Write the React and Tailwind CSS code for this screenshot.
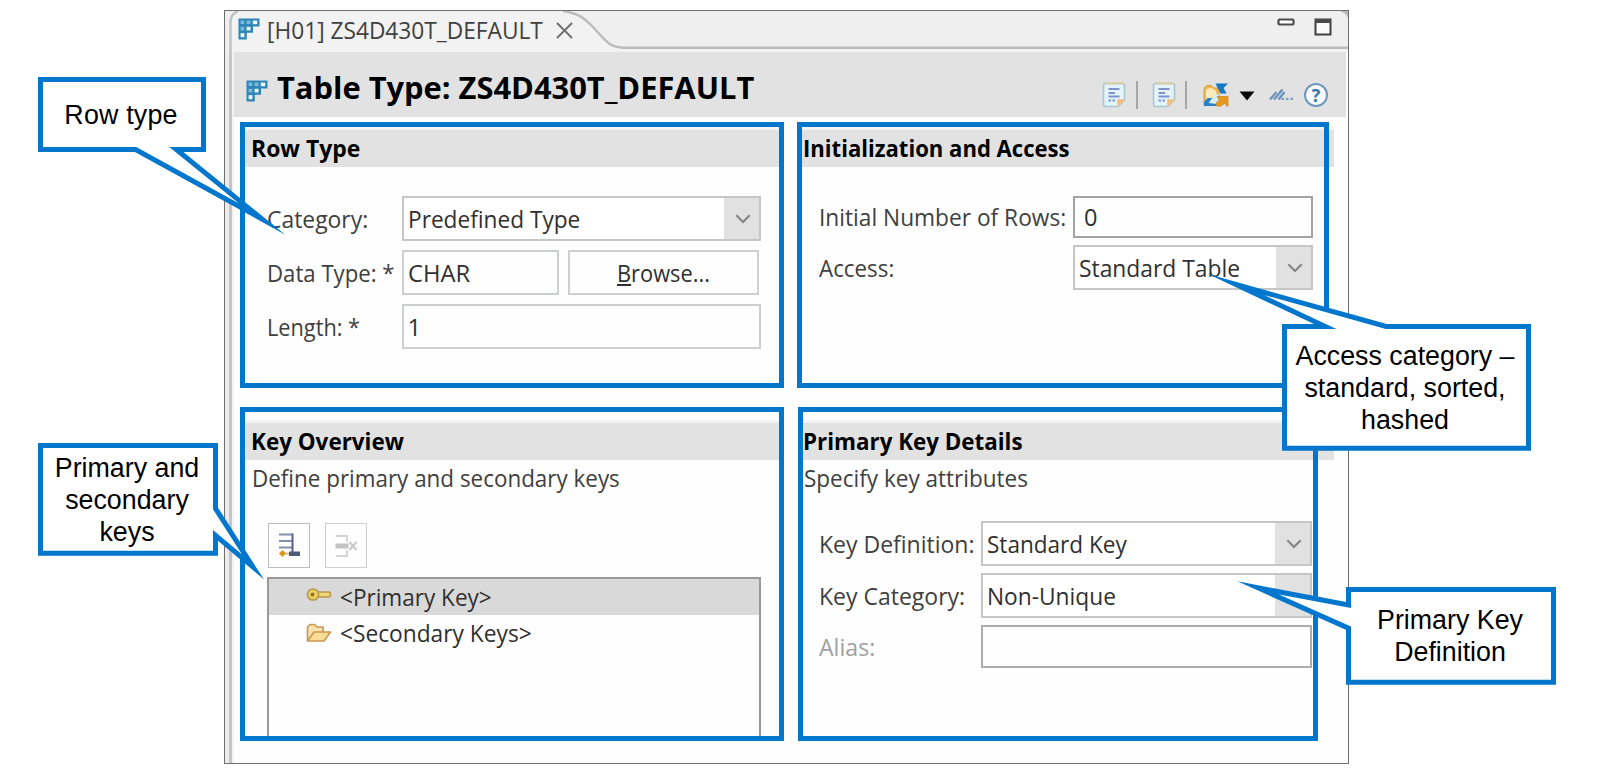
const SANS = "font-['Open_Sans','Liberation_Sans',sans-serif]";

function Txt({ className = "", children }) {
  return (
    <span className={`inline-block origin-left whitespace-nowrap text-[24px] leading-[24px] ${className}`}>
      {children}
    </span>
  );
}

function GridIcon() {
  return (
    <svg width="22" height="22" viewBox="0 0 22 22" className="shrink-0">
      <path d="M0.500 0.500H21.500V8.500H15V14.800H8.800V21.500H0.500Z" fill="#2f86b6" />
      <g fill="#7dbbdc">
        <rect x="2.600" y="2.600" width="3.600" height="3.400" />
        <rect x="8.600" y="2.600" width="3.800" height="3.400" />
        <rect x="2.600" y="8.800" width="3.600" height="3.600" />
      </g>
      <g fill="#f4fbff">
        <rect x="14.800" y="2.600" width="4.400" height="3.600" />
        <rect x="8.600" y="8.800" width="3.900" height="3.600" />
        <rect x="2.600" y="15.200" width="3.800" height="4" />
      </g>
    </svg>
  );
}

function NoteIcon() {
  return (
    <svg width="24" height="26" viewBox="0 0 24 26" className="shrink-0">
      <path d="M3.500 1.500H20.500Q22.500 1.500 22.500 3.500V18L16 24.500H3.500Q1.500 24.500 1.500 22.500V3.500Q1.500 1.500 3.500 1.500Z" fill="#e3f4fb" stroke="#a9c6cf" strokeWidth="1.600" />
      <path d="M3 1.400H21" stroke="#d8cda4" strokeWidth="2" />
      <path d="M15.500 24.500V17.500H22.500Z" fill="#f6bd77" stroke="#e9c99a" strokeWidth="1" />
      <g stroke="#7d93c9" strokeWidth="2">
        <path d="M6.500 7H17.500M6.500 11H13M6.500 14.500H17.500M6.500 18.500H9M10.500 18.500H13" />
      </g>
    </svg>
  );
}

function ShareIcon() {
  return (
    <svg width="26" height="25" viewBox="0 0 26 25" className="shrink-0">
      <path d="M1 22V5L3.500 2.500H8.500L10.500 5H16V22Z" fill="#f0b64e" stroke="#dba047" strokeWidth="1" />
      <path d="M3 6.500L8 4.500L13 8V14L3 19Z" fill="#fdebc0" />
      <path d="M1 23V19L4.500 15H16V23Z" fill="#2b7fc4" />
      <path d="M5.500 20L13 10L17.500 14L14 21Z" fill="#d5edf3" />
      <path d="M12.500 0.500H25L20.500 5L23.500 10.500H17.500Z" fill="#1277c4" />
      <path d="M14 13.500H25V23.500L21.500 20.500L18 23H13.500V19.500L16.500 17.500Z" fill="#e59a1c" stroke="#d08a18" strokeWidth="0.800" />
    </svg>
  );
}

function Chevron() {
  return (
    <svg width="16" height="10" viewBox="0 0 16 10">
      <path d="M1.300 1.300L8 8L14.700 1.300" fill="none" stroke="#868686" strokeWidth="2.200" />
    </svg>
  );
}

function Combo({ className, text, hideArrow = false }) {
  return (
    <div className={`flex h-[45px] border-2 border-[#c6c6c6] bg-white ${className}`}>
      <div className="flex flex-1 items-center pl-[4px] text-[#303030]">{text}</div>
      <div className="flex w-[35px] items-center justify-center bg-[#e1e1e1] pl-[3px]">{!hideArrow && <Chevron />}</div>
    </div>
  );
}

function SectionTitle({ className = "", children }) {
  return (
    <div className={`flex h-[40px] border-t-[3px] border-[#f2f2f2] bg-[#e2e2e2] font-bold text-black ${className}`}>
      {children}
    </div>
  );
}

function Frame() {
  return <div className="pointer-events-none absolute inset-0 border-[5px] border-[#0077cd]" />;
}

function TabStrip() {
  return (
    <div className="relative h-[41px] bg-[#efefef]">
      <svg width="1123" height="41" viewBox="0 0 1123 41" className="absolute inset-0">
        <path d="M5 41V10Q6 3 13 0H340C352 2 357 6 367 15C381 30 384 36.700 399 36.700H1123V41H5Z" fill="#f2f2f2" />
        <path d="M5.500 41V10Q6 3 13 0" fill="none" stroke="#c2c2c2" strokeWidth="2.500" />
        <path d="M338 0C352 2 358 6 367 15C381 30 384 36.700 399 36.700H1123" fill="none" stroke="#bcbcbc" strokeWidth="2.400" />
        <path d="M1115 0Q1121 2 1123 7V0Z" fill="#b9b9b9" />
      </svg>
      <div className="relative flex pl-[13px] pt-[7px]">
        <GridIcon />
        <Txt className="ml-[7px] w-[276px] scale-x-[0.946] text-[#404040]">[H01] ZS4D430T_DEFAULT</Txt>
        <svg width="17" height="17" viewBox="0 0 17 17" className="ml-[13px] mt-[4px]">
          <path d="M1 1L16 16M16 1L1 16" stroke="#6e6e6e" strokeWidth="1.800" />
        </svg>
        <div className="ml-auto flex gap-[19px] pr-[16px]">
          <svg width="18" height="8" viewBox="0 0 18 8">
            <rect x="1.500" y="1.500" width="15" height="5" rx="1" fill="#fff" stroke="#4c4c4c" strokeWidth="2.200" />
          </svg>
          <svg width="18" height="18" viewBox="0 0 18 18">
            <rect x="1.500" y="1.500" width="15" height="15" fill="#fafafa" stroke="#3f3f3f" strokeWidth="2" />
            <rect x="1" y="1" width="16" height="4" fill="#4a4a4a" />
          </svg>
        </div>
      </div>
    </div>
  );
}

function TitleBar() {
  return (
    <div className="flex h-[65px] bg-[#e2e2e2] pl-[12px]">
      <div className="pt-[28px]">
        <GridIcon />
      </div>
      <Txt className="ml-[9px] mt-[20px] scale-x-[1.028] text-[30px] leading-[32px] font-bold text-black">
        Table Type: ZS4D430T_DEFAULT
      </Txt>
      <div className="ml-auto mt-[27px] flex h-[32px] items-center self-start pr-[18px]">
        <NoteIcon />
        <div className="ml-[10px] h-[28px] w-[2px] bg-[#a6a6a6]" />
        <div className="ml-[14px] flex"><NoteIcon /></div>
        <div className="ml-[9px] h-[28px] w-[2px] bg-[#a6a6a6]" />
        <div className="ml-[16px] flex"><ShareIcon /></div>
        <svg width="16" height="10" viewBox="0 0 16 10" className="ml-[10px] mt-[1px]">
          <path d="M0.500 0.500H15.500L8 9.500Z" fill="#0a0a0a" />
        </svg>
        <svg width="25" height="14" viewBox="0 0 25 14" className="ml-[14px] mt-[-1px]">
          <path d="M1 11.500L7.500 4M5 11.500L13.500 1.500M9.500 11.500L15.500 4" stroke="#6f93b8" strokeWidth="2.400" fill="none" />
          <path d="M12.500 10.800h2.500M17 10.800h2.500M21.500 10.800h2.500" stroke="#7d9dbf" strokeWidth="2.200" />
        </svg>
        <div className="ml-[10px] flex h-[24px] w-[24px] items-center justify-center rounded-full border-2 border-[#6f97bf] bg-[#f8fbfd] text-[18px] leading-none font-bold text-[#3c74aa]">
          ?
        </div>
      </div>
    </div>
  );
}

function RowType() {
  return (
    <section className="relative h-[266px] w-[544px] pt-[5px] pl-[5px]">
      <SectionTitle className="mr-[5px] pt-[6px] pl-[5px]">
        <Txt className="ml-[1px] scale-x-[0.955]">Row Type</Txt>
      </SectionTitle>
      <div className="mt-[29px] flex flex-col gap-[9px] pl-[21.500px] text-[#404040]">
        <div className="flex items-center">
          <Txt className="w-[135px] scale-x-[0.954]">Category:</Txt>
          <Combo className="w-[359px]" text={<Txt className="scale-x-[0.944]">Predefined Type</Txt>} />
        </div>
        <div className="flex items-center">
          <Txt className="w-[135px] scale-x-[0.924]">Data Type: *</Txt>
          <div className="flex h-[45px] w-[157px] items-center border-2 border-[#cdced2] pl-[4px] text-[#303030]">
            <Txt className="scale-x-[0.99]">CHAR</Txt>
          </div>
          <div className="ml-[9px] flex h-[45px] w-[191px] items-center border-2 border-[#cfcfcf] pl-[47.500px] text-[#303030]">
            <Txt className="scale-x-[0.91]">
              <span className="underline decoration-2 underline-offset-[2px]">B</span>rowse...
            </Txt>
          </div>
        </div>
        <div className="flex items-center">
          <Txt className="w-[135px] scale-x-[0.905]">Length: *</Txt>
          <div className="flex h-[45px] w-[359px] items-center border-2 border-[#cdced2] pl-[4px] text-[#303030]">
            <Txt>1</Txt>
          </div>
        </div>
      </div>
      <Frame />
    </section>
  );
}

function InitAccess() {
  return (
    <section className="relative h-[266px] w-[532px] pt-[5px]">
      <SectionTitle className="mr-[-5px] pt-[6px] pl-[6px]">
        <Txt className="scale-x-[0.92]">Initialization and Access</Txt>
      </SectionTitle>
      <div className="mt-[29px] flex flex-col gap-[7px] pl-[21.500px] text-[#404040]">
        <div className="flex items-center">
          <Txt className="w-[254px] scale-x-[0.946]">Initial Number of Rows:</Txt>
          <div className="flex h-[42px] w-[240px] items-center border-2 border-[#a3a3a3] pl-[9px] text-[#303030]">
            <Txt className="scale-x-[0.98]">0</Txt>
          </div>
        </div>
        <div className="flex items-center">
          <Txt className="w-[254px] scale-x-[0.931]">Access:</Txt>
          <Combo className="w-[240px]" text={<Txt className="scale-x-[0.951]">Standard Table</Txt>} />
        </div>
      </div>
      <Frame />
    </section>
  );
}

function AddKeyIcon() {
  return (
    <svg width="23" height="26" viewBox="0 0 23 26">
      <path d="M1 2.500H15M1 9H15M1 15.500H15" stroke="#8390a8" strokeWidth="2.200" />
      <path d="M14.500 1.500V20" stroke="#54637f" strokeWidth="2" />
      <rect x="11" y="19.500" width="11" height="4.500" fill="#4b5a76" />
      <path d="M4.500 18L8 21.500L4.500 25L1 21.500Z" fill="#dc961f" />
      <path d="M7 21.500H11" stroke="#c9b089" strokeWidth="1.600" />
    </svg>
  );
}

function RemoveKeyIcon() {
  return (
    <svg width="23" height="24" viewBox="0 0 23 24">
      <path d="M1 2H12V8M1 22H12V16" fill="none" stroke="#d2d2d2" strokeWidth="1.800" />
      <rect x="0.500" y="9.500" width="13" height="5" fill="#c4c4c4" />
      <path d="M14.500 8L21.500 16M21.500 8L14.500 16" stroke="#c8c8c8" strokeWidth="2" />
    </svg>
  );
}

function KeyIcon() {
  return (
    <svg width="26" height="16" viewBox="0 0 26 16">
      <rect x="10" y="5" width="14.500" height="5" rx="2" fill="#edd57c" stroke="#b8954a" strokeWidth="1.400" />
      <circle cx="7" cy="7.500" r="5.600" fill="#ead061" stroke="#b8954a" strokeWidth="1.500" />
      <circle cx="6.500" cy="7.500" r="1.900" fill="#94762b" />
    </svg>
  );
}

function FolderIcon() {
  return (
    <svg width="26" height="20" viewBox="0 0 26 20">
      <path d="M1.500 18V4L4 1.500H8.500L11 4H17V9" fill="#fbe3ae" stroke="#c99650" strokeWidth="1.600" strokeLinejoin="round" />
      <path d="M1.500 18L8 9H24.500L18 18Z" fill="#fbdc94" stroke="#c99650" strokeWidth="1.600" strokeLinejoin="round" />
    </svg>
  );
}

function KeyOverview() {
  return (
    <section className="relative h-[334px] w-[544px] pt-[13px] pl-[5px]">
      <SectionTitle className="mr-[5px] pt-[6px] pl-[5px]">
        <Txt className="ml-[1px] scale-x-[0.935]">Key Overview</Txt>
      </SectionTitle>
      <div className="mt-[6px] flex pl-[6.500px] text-[#404040]">
        <Txt className="scale-x-[0.934]">Define primary and secondary keys</Txt>
      </div>
      <div className="mt-[33px] flex gap-[15px] pl-[23px]">
        <div className="flex h-[45px] w-[42px] items-center justify-center border-[1.500px] border-[#bdbdbd] pb-[1px]">
          <AddKeyIcon />
        </div>
        <div className="flex h-[45px] w-[42px] items-center justify-center border-[1.500px] border-[#cfcfcf]">
          <RemoveKeyIcon />
        </div>
      </div>
      <div className="mt-[9px] ml-[22px] h-[164px] w-[494px] border-2 border-b-0 border-[#999999] text-[#303030]">
        <div className="flex h-[36px] items-center bg-[#d9d9d9] pl-[37px]">
          <div className="mb-[5px]"><KeyIcon /></div>
          <Txt className="ml-[8px] scale-x-[0.939]">&lt;Primary Key&gt;</Txt>
        </div>
        <div className="flex h-[36px] items-center pl-[37px]">
          <FolderIcon />
          <Txt className="ml-[8px] scale-x-[0.947]">&lt;Secondary Keys&gt;</Txt>
        </div>
      </div>
      <Frame />
    </section>
  );
}

function PrimaryKeyDetails() {
  return (
    <section className="relative ml-px h-[334px] w-[520px] pt-[13px]">
      <SectionTitle className="mr-[-16px] pt-[6px] pl-[5px]">
        <Txt className="scale-x-[0.932]">Primary Key Details</Txt>
      </SectionTitle>
      <div className="mt-[6px] flex pl-[6px] text-[#404040]">
        <Txt className="scale-x-[0.938]">Specify key attributes</Txt>
      </div>
      <div className="mt-[31px] flex flex-col gap-[7px] pl-[21px] text-[#404040]">
        <div className="flex items-center">
          <Txt className="w-[162px] scale-x-[0.958]">Key Definition:</Txt>
          <Combo className="w-[331px]" text={<Txt className="scale-x-[0.94]">Standard Key</Txt>} />
        </div>
        <div className="flex items-center">
          <Txt className="w-[162px] scale-x-[0.958]">Key Category:</Txt>
          <Combo className="w-[331px]" hideArrow text={<Txt className="scale-x-[0.947]">Non-Unique</Txt>} />
        </div>
        <div className="flex items-center">
          <Txt className="w-[162px] scale-x-[0.963] text-[#a0a0a0]">Alias:</Txt>
          <div className="h-[43px] w-[331px] border-2 border-[#adadad]" />
        </div>
      </div>
      <Frame />
    </section>
  );
}

const CALLOUT_TEXT =
  "absolute flex flex-col items-center justify-center whitespace-nowrap text-center text-[26.800px] leading-[32px] text-black font-['Liberation_Sans',Arial,sans-serif]";

function Callouts() {
  return (
    <div className="pointer-events-none absolute inset-0">
      <svg width="1600" height="775" viewBox="0 0 1600 775" className="absolute inset-0">
        <g fill="#fff" stroke="#0077cd" strokeWidth="5" strokeMiterlimit="40">
          <path d="M40.500 79.500H203.500V149.500H176.300L262 219L135.600 149.500H40.500Z" />
          <path d="M1284.500 326.500H1325.200L1236 284.500L1386.200 326.500H1528.500V448.200H1284.500Z" />
          <path d="M40.500 445.500H215.500V508.400L253 567L215.500 535.300V553.300H40.500Z" />
          <path d="M1348.500 589.500H1553.500V682.200H1348.500V628.100L1258 587.800L1348.500 605Z" />
        </g>
      </svg>
      <div className={`${CALLOUT_TEXT} left-[37px] top-[78px] h-[74px] w-[168px] tracking-[0.2px]`}>Row type</div>
      <div className={`${CALLOUT_TEXT} left-[37px] top-[443px] h-[113px] w-[180px]`}>
        <span>Primary and</span>
        <span>secondary</span>
        <span>keys</span>
      </div>
      <div className={`${CALLOUT_TEXT} left-[1281px] top-[324px] h-[127px] w-[248px]`}>
        <span>Access category –</span>
        <span>standard, sorted,</span>
        <span>hashed</span>
      </div>
      <div className={`${CALLOUT_TEXT} left-[1346px] top-[587px] h-[97px] w-[208px]`}>
        <span>Primary Key</span>
        <span>Definition</span>
      </div>
    </div>
  );
}

export default function App() {
  return (
    <div className={`relative h-[775px] w-[1600px] overflow-hidden bg-white pt-[10px] pl-[224px] ${SANS}`}>
      <div className="h-[754px] w-[1125px] border border-[#6f6f6f] bg-[#fefefe]">
        <TabStrip />
        <div className="flex h-[711px]">
          <div className="w-[9px] shrink-0 border-r-[2px] border-l-[4px] border-r-[#f3f3f3] border-l-[#ececec] bg-[#c4c4c4]" />
          <div className="mr-[2px] flex-1">
            <TitleBar />
            <div className="mt-[5px] flex flex-col gap-[19px] pl-[6px]">
              <div className="flex gap-[13px]">
                <RowType />
                <InitAccess />
              </div>
              <div className="flex gap-[13px]">
                <KeyOverview />
                <PrimaryKeyDetails />
              </div>
            </div>
          </div>
        </div>
      </div>
      <Callouts />
    </div>
  );
}
